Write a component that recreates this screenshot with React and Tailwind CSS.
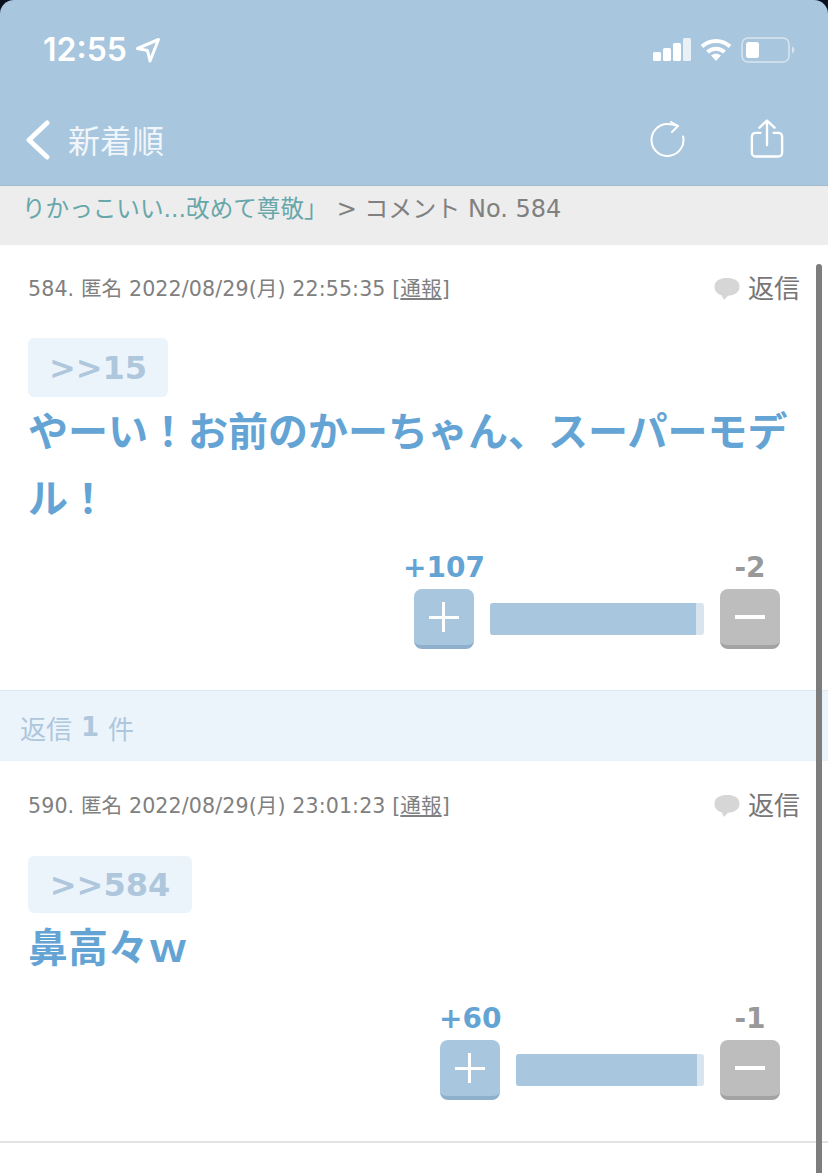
const sans = "font-['DejaVu_Sans','Noto_Sans_CJK_JP',sans-serif]";

const Signal = () => (
  <svg width="38" height="24" viewBox="0 0 38 24" fill="white">
    <rect x="0" y="14" width="8" height="9" rx="1.5" />
    <rect x="10" y="10" width="8" height="13" rx="1.5" />
    <rect x="20" y="5" width="8" height="18" rx="1.5" />
    <rect x="30" y="0" width="8" height="23" rx="1.5" opacity="0.75" />
  </svg>
);

const Wifi = () => (
  <svg width="32" height="24" viewBox="0 0 32 24" fill="none" stroke="white" strokeWidth="4">
    <path d="M2 8.500C10 1 22 1 30 8.500" />
    <path d="M7.500 14C12.500 9.500 19.500 9.500 24.500 14" />
    <path d="M16 23l-5-5.500c3-2.200 7-2.200 10 0z" fill="white" stroke="none" />
  </svg>
);

const Battery = () => (
  <svg width="54" height="26" viewBox="0 0 54 26" fill="none">
    <rect x="1" y="1" width="47" height="24" rx="6" stroke="white" strokeOpacity="0.55" strokeWidth="1.500" />
    <rect x="5" y="5" width="13" height="16" rx="2.500" fill="white" />
    <path d="M51 9.500c1.500.6 2.500 2 2.500 3.500s-1 2.900-2.500 3.500z" fill="white" fillOpacity="0.55" />
  </svg>
);

const Back = () => (
  <svg width="26" height="40" viewBox="0 0 26 40" fill="none" stroke="white" strokeWidth="5" strokeLinecap="round" strokeLinejoin="round">
    <path d="M22 3L4 20l18 17" />
  </svg>
);

const Refresh = () => (
  <svg width="36" height="38" viewBox="0 0 36 38" fill="none" stroke="white" strokeWidth="2" strokeLinecap="round" strokeLinejoin="round">
    <path d="M28 5C24.500 3.700 21 3 17.500 3A16 16 0 1 0 33.100 15.500" />
    <path d="M21 1l7 4-6 6" />
  </svg>
);

const Share = () => (
  <svg className="-mt-[3px]" width="34" height="41" viewBox="0 0 36 42" fill="none" stroke="white" strokeWidth="2.500" strokeLinecap="round" strokeLinejoin="round">
    <path d="M11 15H6a4 4 0 0 0-4 4v17a4 4 0 0 0 4 4h24a4 4 0 0 0 4-4V19a4 4 0 0 0-4-4h-5" />
    <path d="M18 28V2M10 9.500L18 2l8 7.500" />
  </svg>
);

const Bubble = () => (
  <svg width="26" height="24" viewBox="0 0 26 24" fill="#d6d6d6">
    <path d="M13 1C6 1 .5 3.500.5 10c0 4 3 7 7 8.300L10 23l4-4.200C20.500 18.500 25.500 15 25.500 10 25.500 3.500 20 1 13 1z" />
  </svg>
);

const Comment = ({ no, date, anchor, anchorClass, lines, plus, minus, plusOffset, barWidth, fillWidth, bodyClass, voteTop }) => (
  <section className={`bg-white px-[28px] ${bodyClass}`}>
    <div className="flex h-[24px] items-center justify-between text-[#808080]">
      <p className="whitespace-nowrap text-[20.600px] tracking-[0.1px]">
        {no}. 匿名 {date} [<span className="underline">通報</span>]
      </p>
      <div className="flex items-center gap-[8px]">
        <Bubble />
        <span className="text-[26px] text-[#777]">返信</span>
      </div>
    </div>
    <div
      className={`flex items-center justify-center rounded-[6px] bg-[#ecf4fb] text-[32px] font-bold text-[#aec7dd] ${anchorClass}`}
    >
      {anchor}
    </div>
    <div className="mt-[2px] whitespace-nowrap text-[40px] font-bold leading-[67px] text-[#64a4d4]">
      {lines.map((line) => (
        <p key={line}>{line}</p>
      ))}
    </div>
    <div className={`flex justify-end pr-[20px] ${voteTop}`}>
      <div className="flex flex-col">
        <div className="flex justify-between text-[28px] font-bold leading-[34px]">
          <span className={`text-center text-[#64a4d4] ${plusOffset}`}>{plus}</span>
          <span className="w-[60px] text-center text-[#999]">{minus}</span>
        </div>
        <div className="mt-[4px] flex items-center gap-[16px]">
          <div className="relative h-[60px] w-[60px] rounded-[8px] border-b-[4px] border-[#8fb0cc] bg-[#a8c6de]">
            <div className="absolute left-[15px] top-[27px] h-[3px] w-[30px] bg-white" />
            <div className="absolute left-[28px] top-[13px] h-[30px] w-[3px] bg-white" />
          </div>
          <div className={`h-[32px] rounded-[3px] bg-[#d8e5ef] ${barWidth}`}>
            <div className={`h-full rounded-l-[3px] bg-[#a8c6de] ${fillWidth}`} />
          </div>
          <div className="relative h-[60px] w-[60px] rounded-[8px] border-b-[4px] border-[#a3a3a3] bg-[#bdbdbd]">
            <div className="absolute left-[15px] top-[26px] h-[4px] w-[30px] bg-white" />
          </div>
        </div>
      </div>
    </div>
  </section>
);

export default function App() {
  return (
    <div className={`relative h-[1173px] w-[828px] overflow-hidden bg-[#0a1020] ${sans}`}>
      <header className="h-[186px] rounded-t-[14px] border-b border-[#a0bace] bg-[#a8c6de] text-white">
        <div className="flex h-[100px] items-center justify-between pl-[43px] pr-[33px]">
          <div className="flex items-center gap-[8px]">
            <span className="font-['Inter'] text-[32px] font-semibold">12:55</span>
            <svg width="26" height="26" viewBox="0 0 26 26" fill="none" stroke="white" strokeWidth="3" strokeLinejoin="round">
              <path d="M2.500 11.500L23.500 2.500L15 24L12.500 13.500z" />
            </svg>
          </div>
          <div className="flex items-center gap-[9px]">
            <Signal />
            <Wifi />
            <Battery />
          </div>
        </div>
        <div className="flex h-[85px] items-center justify-between pb-[5px] pl-[25px] pr-[44px]">
          <div className="flex items-center gap-[17px]">
            <Back />
            <span className="-mt-[3px] font-['Noto_Sans_CJK_JP'] text-[32px] font-normal text-[#f0f6fb]">新着順</span>
          </div>
          <div className="flex items-center gap-[64px]">
            <Refresh />
            <Share />
          </div>
        </div>
      </header>

      <div className="flex h-[59px] items-start whitespace-nowrap bg-[#ededed] pl-[22px] pt-[7px] text-[23.600px] leading-[32px]">
        <span className="text-[#67a7aa]">りかっこいい...改めて尊敬」</span>
        <span className="ml-[9px] text-[24px] text-[#808080]">&gt; コメント No. 584</span>
      </div>

      <Comment
        no="584"
        date="2022/08/29(月) 22:55:35"
        anchor=">>15"
        anchorClass="mt-[37px] h-[59px] w-[140px]"
        lines={["やーい！お前のかーちゃん、スーパーモデ", "ル！"]}
        plus="+107"
        minus="-2"
        plusOffset="w-[84px] -ml-[12px]"
        barWidth="w-[214px]"
        fillWidth="w-[206px]"
        bodyClass="h-[445px] pt-[32px]"
        voteTop="mt-[18px]"
      />

      <div className="flex h-[71px] items-center border-t border-[#dbe8f2] bg-[#ecf4fb] pl-[20px] pt-[3px] text-[26px] text-[#aec7dd]">
        <span className="font-['Noto_Sans_CJK_JP']">返信</span>
        <span className="mx-[9px] font-bold">1</span>
        <span className="font-['Noto_Sans_CJK_JP']">件</span>
      </div>

      <Comment
        no="590"
        date="2022/08/29(月) 23:01:23"
        anchor=">>584"
        anchorClass="mt-[38px] h-[57px] w-[164px]"
        lines={["鼻高々ｗ"]}
        plus="+60"
        minus="-1"
        plusOffset="w-[60px] -ml-[1px]"
        barWidth="w-[188px]"
        fillWidth="w-[181px]"
        bodyClass="h-[380px] pt-[33px]"
        voteTop="mt-[20px]"
      />
      <div className="h-[2px] w-full bg-[#e3e3e3]" />
      <div className="h-[40px] bg-white" />

      <div className="absolute right-[6px] top-[264px] h-[909px] w-[6px] rounded-t-full bg-[#7d7d7d]" />
    </div>
  );
}
